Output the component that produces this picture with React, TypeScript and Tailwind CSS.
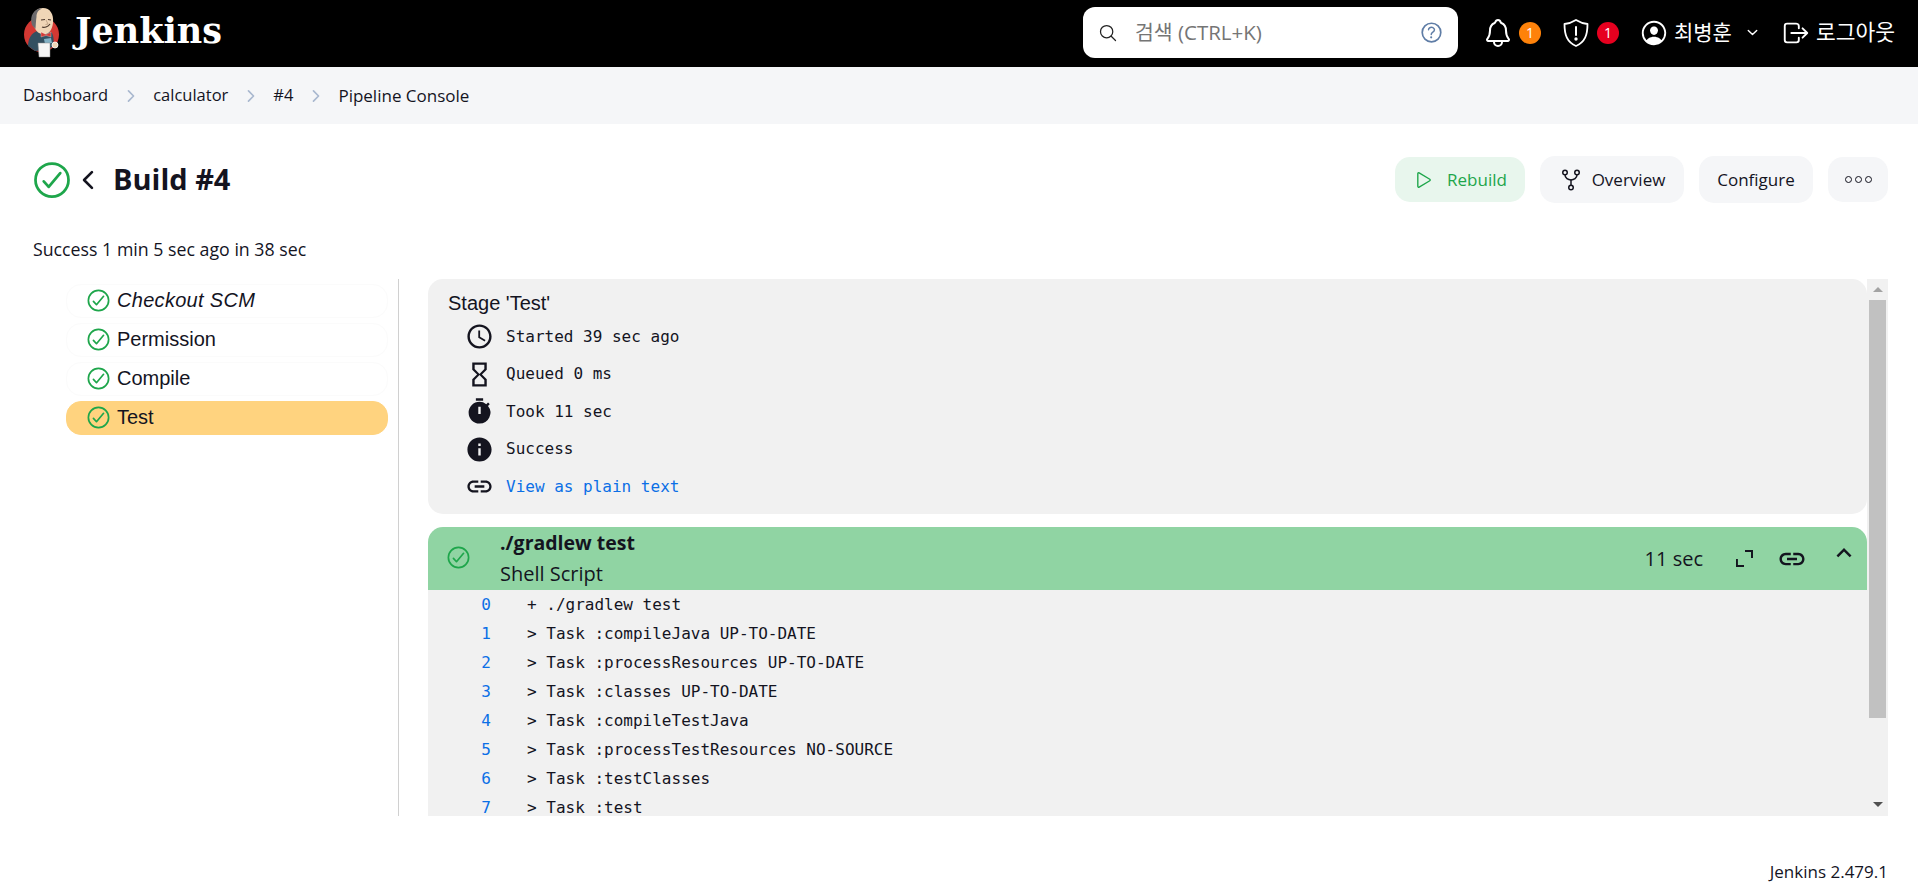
import {
  IoCheckmarkCircleOutline,
  IoChevronBack,
  IoChevronDown,
  IoChevronForward,
  IoGitNetworkOutline,
  IoHelpCircleOutline,
  IoLogOutOutline,
  IoNotificationsOutline,
  IoPersonCircleOutline,
  IoPlayOutline,
  IoSearchOutline,
} from "react-icons/io5";
import { MdAccessTime, MdHourglassEmpty, MdInfo, MdKeyboardArrowUp, MdLink, MdTimer } from "react-icons/md";

const sans = "font-['Open_Sans','Noto_Sans_CJK_KR',sans-serif]";
const arial = "font-['Liberation_Sans',sans-serif]";
const mono = "font-['DejaVu_Sans_Mono',monospace]";

const stages = ["Checkout SCM", "Permission", "Compile", "Test"];

const logLines = [
  "+ ./gradlew test",
  "> Task :compileJava UP-TO-DATE",
  "> Task :processResources UP-TO-DATE",
  "> Task :classes UP-TO-DATE",
  "> Task :compileTestJava",
  "> Task :processTestResources NO-SOURCE",
  "> Task :testClasses",
  "> Task :test",
];

function JenkinsLogo() {
  return (
    <svg width="36" height="50" viewBox="0 0 36 50" className="shrink-0">
      <circle cx="17.5" cy="26.5" r="17.5" fill="#d33833" />
      {/* jacket */}
      <path d="M4 38 C4 30 8 25 13 23 L27 24 C30 27 30 33 29 38 L24 42 L11 43 Z" fill="#335061" />
      {/* head */}
      <path d="M9 16 C6 6 12 0 19 0 C26 0 30 6 29 15 C28 23 24 27 19 26 C14 26 11 22 9 16 Z" fill="#f0d6b7" />
      <path d="M8 17 C5 7 11 0 18 0.5 C14 2 12.5 5 12.5 9 C12 12 12 15 11.5 21 Z" fill="#6d6b6d" />
      <path d="M17 12 L21 11.5 M24 11.5 L27 12 M18 19 C20 20 24 19 26 16" stroke="#49362a" strokeWidth="1.1" fill="none" />
      <path d="M22 12 L24 16 L21.5 16.5" stroke="#b89a7e" strokeWidth="0.8" fill="none" />
      {/* bow tie */}
      <path d="M17 24 L22 26.5 L27 24 L27 29 L22 27.5 L17 29 Z" fill="#d33833" stroke="#fff" strokeWidth="0.3" />
      <path d="M20 31 L27 30 L28 35 L21 36 Z" fill="#81b0c4" />
      {/* apron and hand */}
      <path d="M14 35 L26 35 L26 49 L15 49 Z" fill="#f5f5f5" stroke="#888" strokeWidth="0.5" />
      <circle cx="31" cy="37" r="3" fill="#f0d6b7" stroke="#fff" strokeWidth="0.8" />
    </svg>
  );
}

function Shield() {
  return (
    <svg width="28" height="30" viewBox="0 0 28 30" fill="none" stroke="white" strokeWidth="1.8" strokeLinejoin="round">
      <path d="M14 2 C10 4.5 6.5 5.6 2.5 6 C2.5 17 5 24 14 28 C23 24 25.5 17 25.5 6 C21.5 5.6 18 4.5 14 2 Z" />
      <path d="M14 9 L14 17" strokeLinecap="round" strokeWidth="2" />
      <circle cx="14" cy="21" r="0.8" fill="white" />
    </svg>
  );
}

function ExpandIcon() {
  return (
    <svg width="17" height="17" viewBox="0 0 17 17" fill="none" stroke="#14141f" strokeWidth="2">
      <path d="M0.9 9 V16 H8" />
      <path d="M9 1 H16 V8" />
    </svg>
  );
}

function Crumb({ label }: { label: string }) {
  return (
    <>
      <span>{label}</span>
      <IoChevronForward size={18} className="mx-[13.5px] text-[#a9b8cf]" />
    </>
  );
}

export default function App() {
  return (
    <div className={`flex h-screen flex-col overflow-hidden bg-white text-[#14141f] ${sans}`}>
      <header className="flex h-[67px] shrink-0 items-center bg-black pr-[23px] pb-[2px] pl-[24px] text-white">
        <JenkinsLogo />
        <span className="mb-[2px] ml-[15px] font-['DejaVu_Serif',serif] text-[35px] font-bold">Jenkins</span>
        <div className="ml-auto flex h-[51px] w-[375px] items-center rounded-[12px] bg-white pr-[13px] pl-[15px]">
          <IoSearchOutline size={20} className="text-[#222]" />
          <span className="ml-[17px] text-[20.5px] text-[#757575]">검색 (CTRL+K)</span>
          <IoHelpCircleOutline size={27} className="ml-auto text-[#5f7da6]" />
        </div>
        <IoNotificationsOutline size={32} className="ml-[24px]" />
        <span className="ml-[5px] flex h-[22px] w-[22px] items-center justify-center rounded-full bg-[#fe820a] text-[14px]">1</span>
        <div className="ml-[21px] flex"><Shield /></div>
        <span className="ml-[7px] flex h-[22px] w-[22px] items-center justify-center rounded-full bg-[#e6001f] text-[14px]">1</span>
        <IoPersonCircleOutline size={30} className="ml-[20px]" />
        <span className="ml-[5px] text-[21px]">최병훈</span>
        <IoChevronDown size={15} className="ml-[13px]" />
        <IoLogOutOutline size={30} className="ml-[21px]" />
        <span className="ml-[5px] text-[21.5px]">로그아웃</span>
      </header>

      <nav className="flex h-[57px] shrink-0 items-center bg-[#f5f6f8] pl-[23px] text-[16.5px]">
        <Crumb label="Dashboard" />
        <Crumb label="calculator" />
        <Crumb label="#4" />
        <span className="text-[17px]">Pipeline Console</span>
      </nav>

      <main className="flex flex-1 flex-col pr-[30px] pl-[33px]">
        <div className="mt-[33px] flex h-[45px] items-center">
          <IoCheckmarkCircleOutline size={44} className="-ml-[3px] text-[#1ea64b]" />
          <IoChevronBack size={28} />
          <h1 className="mb-[2px] ml-[11px] text-[29px] font-bold">Build #4</h1>
          <div className="ml-auto flex items-center gap-[15px] text-[17px]">
            <button className="flex h-[45px] w-[130px] items-center justify-center gap-[12px] rounded-[15px] bg-[#e8f6ed] text-[#1ea64b]">
              <IoPlayOutline size={22} />
              Rebuild
            </button>
            <button className="flex h-[47px] w-[144px] items-center justify-center gap-[9px] rounded-[15px] bg-[#f5f6f8]">
              <IoGitNetworkOutline size={24} />
              Overview
            </button>
            <button className="flex h-[47px] w-[114px] items-center justify-center rounded-[15px] bg-[#f5f6f8]">Configure</button>
            <button className="flex h-[45px] w-[60px] items-center justify-center rounded-[15px] bg-[#f5f6f8]">
              <span className="flex gap-[3px]">
                <i className="h-[7px] w-[7px] rounded-full border border-[#14141f]" />
                <i className="h-[7px] w-[7px] rounded-full border border-[#14141f]" />
                <i className="h-[7px] w-[7px] rounded-full border border-[#14141f]" />
              </span>
            </button>
          </div>
        </div>

        <p className="mt-[35px] h-[24px] text-[17.75px] leading-[24px]">Success 1 min 5 sec ago in 38 sec</p>

        <div className="mt-[18px] flex h-[537px]">
          <aside className={`flex w-[366px] shrink-0 flex-col gap-[5px] border-r border-[#d0d0d0] pt-[5px] pr-[10px] pl-[33px] ${arial}`}>
            {stages.map((s, i) => (
              <div
                key={s}
                className={`flex h-[34px] items-center rounded-[15px] border pb-[2px] pl-[20px] text-[20px] ${
                  s === "Test" ? "border-[#ffd37f] bg-[#ffd37f]" : "border-[#fbfbfb]"
                } ${i === 0 ? "italic tracking-[0.3px]" : ""}`}
              >
                <IoCheckmarkCircleOutline size={27} className="mr-[5px] -ml-[2px] text-[#1ea64b]" />
                {s}
              </div>
            ))}
          </aside>

          <div className="ml-[29px] flex min-w-0 flex-1">
            <div className="flex min-w-0 flex-1 flex-col overflow-hidden">
              <section className="h-[235px] shrink-0 rounded-[15px] bg-[#f1f1f1] pt-[12px] pl-[20px]">
                <div className={`h-[24px] text-[20px] leading-[24px] ${arial}`}>Stage 'Test'</div>
                <div className={`mt-[3px] pl-[17px] text-[16px] ${mono}`}>
                  <div className="flex h-[37.5px] items-center"><MdAccessTime size={29} /><span className="ml-[12px]">Started 39 sec ago</span></div>
                  <div className="flex h-[37.5px] items-center"><MdHourglassEmpty size={29} /><span className="ml-[12px]">Queued 0 ms</span></div>
                  <div className="flex h-[37.5px] items-center"><MdTimer size={29} /><span className="ml-[12px]">Took 11 sec</span></div>
                  <div className="flex h-[37.5px] items-center"><MdInfo size={29} /><span className="ml-[12px]">Success</span></div>
                  <div className="flex h-[37.5px] items-center"><MdLink size={29} /><span className="ml-[12px] text-[#0b6fe6]">View as plain text</span></div>
                </div>
              </section>

              <section className="mt-[13px] flex h-[63px] shrink-0 items-center rounded-t-[15px] bg-[#90d4a3] pr-[8px] pl-[17px]">
                <IoCheckmarkCircleOutline size={27} className="mb-[2px] text-[#1ea64b]" />
                <div className="ml-[28px] flex h-full flex-col justify-center">
                  <div className="text-[19.5px] leading-[32px] font-bold">./gradlew test</div>
                  <div className="mb-[1px] text-[20px] leading-[30px]">Shell Script</div>
                </div>
                <span className="ml-auto text-[20px]">11 sec</span>
                <span className="ml-[33px] flex"><ExpandIcon /></span>
                <MdLink size={30} className="ml-[24px]" />
                <MdKeyboardArrowUp size={30} className="mb-[12px] ml-[22px]" />
              </section>

              <div className={`flex-1 overflow-hidden bg-[#f1f1f1] text-[16px] ${mono}`}>
                {logLines.map((line, i) => (
                  <div key={i} className="flex h-[29px] items-center">
                    <span className="w-[63px] text-right text-[#0b6fe6]">{i}</span>
                    <span className="ml-[36px] whitespace-pre">{line}</span>
                  </div>
                ))}
              </div>
            </div>

            <div className="flex w-[21px] shrink-0 flex-col items-center bg-[#f1f1f1]">
              <div className="flex h-[21px] items-center justify-center">
                <div className="h-0 w-0 border-x-[5px] border-b-[5px] border-x-transparent border-b-[#a3a3a3]" />
              </div>
              <div className="h-[418px] w-[17px] bg-[#c1c1c1]" />
              <div className="mt-auto flex h-[24px] items-center justify-center">
                <div className="h-0 w-0 border-x-[5px] border-t-[5px] border-x-transparent border-t-[#505050]" />
              </div>
            </div>
          </div>
        </div>

        <footer className="mt-auto mb-[9px] text-right text-[17px] leading-[24px]">Jenkins 2.479.1</footer>
      </main>
    </div>
  );
}
